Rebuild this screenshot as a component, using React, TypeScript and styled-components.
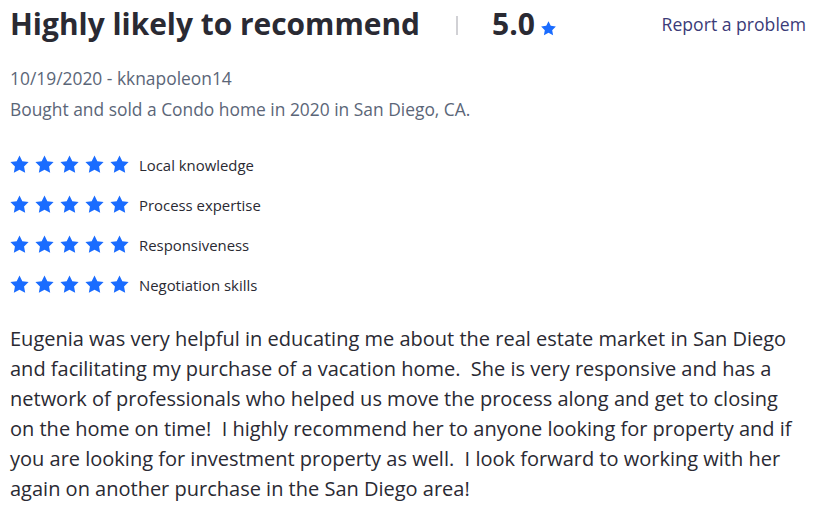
import React from 'react';
import styled, {createGlobalStyle} from 'styled-components';

const GlobalStyle = createGlobalStyle`
  body {
    margin: 0;
    background: #fff;
    font-family: "Open Sans", "Liberation Sans", sans-serif;
  }
`

const criteria = ['Local knowledge', 'Process expertise', 'Responsiveness', 'Negotiation skills']

const Star: React.FC<{size: number}> = ({size}) => (
  <svg width={size} height={size} viewBox="0 0 24 24">
    <path
      fill="#1a6cff"
      d="M12 1.6l3.2 6.6 7.2 1-5.2 5.1 1.3 7.2L12 18.1l-6.5 3.4 1.3-7.2L1.6 9.2l7.2-1z"
    />
  </svg>
)

export default function App() {
  return (
    <>
      <GlobalStyle/>
      <Card>
        <Header>
          <Title>Highly likely to recommend</Title>
          <Divider/>
          <Score>5.0</Score>
          <ScoreStar><Star size={17}/></ScoreStar>
          <ReportLink href="#">Report a problem</ReportLink>
        </Header>
        <MetaBlock>
          <Meta>10/19/2020 - kknapoleon14</Meta>
          <Meta>Bought and sold a Condo home in 2020 in San Diego, CA.</Meta>
        </MetaBlock>
        <Ratings>
          {criteria.map(label =>
            <RatingRow key={label}>
              <Stars>
                {[0, 1, 2, 3, 4].map(i => <Star key={i} size={21}/>)}
              </Stars>
              <RatingLabel>{label}</RatingLabel>
            </RatingRow>
          )}
        </Ratings>
        <Body>
          Eugenia was very helpful in educating me about the real estate market in San Diego
          and facilitating my purchase of a vacation home.&nbsp; She is very responsive and has a
          network of professionals who helped us move the process along and get to closing
          on the home on time!&nbsp; I highly recommend her to anyone looking for property and if
          you are looking for investment property as well.&nbsp; I look forward to working with her
          again on another purchase in the San Diego area!
        </Body>
      </Card>
    </>
  );
}

const Card = styled.div`
  padding: 2px 10px 0 10px;
  width: 807px;
  box-sizing: content-box;
`
const Header = styled.div`
  display: flex;
  align-items: center;
  height: 42px;
`
const Title = styled.h1`
  margin: 0;
  font-size: 29.9px;
  font-weight: 700;
  color: #2a2a33;
`
const Divider = styled.div`
  width: 2px;
  height: 19px;
  background: #d1d1d5;
  margin: 4px 34px 0 36px;
`
const Score = styled.span`
  font-size: 30px;
  font-weight: 700;
  color: #2a2a33;
`
const ScoreStar = styled.span`
  display: flex;
  margin: 10px 0 0 5px;
`
const ReportLink = styled.a`
  margin-left: auto;
  margin-right: 11px;
  margin-top: 2px;
  font-size: 17.6px;
  color: #3b3b78;
  text-decoration: none;
`
const MetaBlock = styled.div`
  margin-top: 19px;
`
const Meta = styled.div`
  font-size: 17.4px;
  line-height: 31px;
  color: #5b6678;
`
const Ratings = styled.div`
  display: flex;
  flex-direction: column;
  margin-top: 28px;
  gap: 17px;
`
const RatingRow = styled.div`
  display: flex;
  align-items: center;
  height: 23px;
`
const Stars = styled.div`
  display: flex;
  gap: 4px;
  margin-left: -1px;
`
const RatingLabel = styled.span`
  margin-left: 9px;
  font-size: 14.9px;
  color: #2a2a33;
`
const Body = styled.p`
  margin: 28px 0 0 0;
  font-size: 20px;
  line-height: 30px;
  color: #2a2a33;
  width: 788px;
`
